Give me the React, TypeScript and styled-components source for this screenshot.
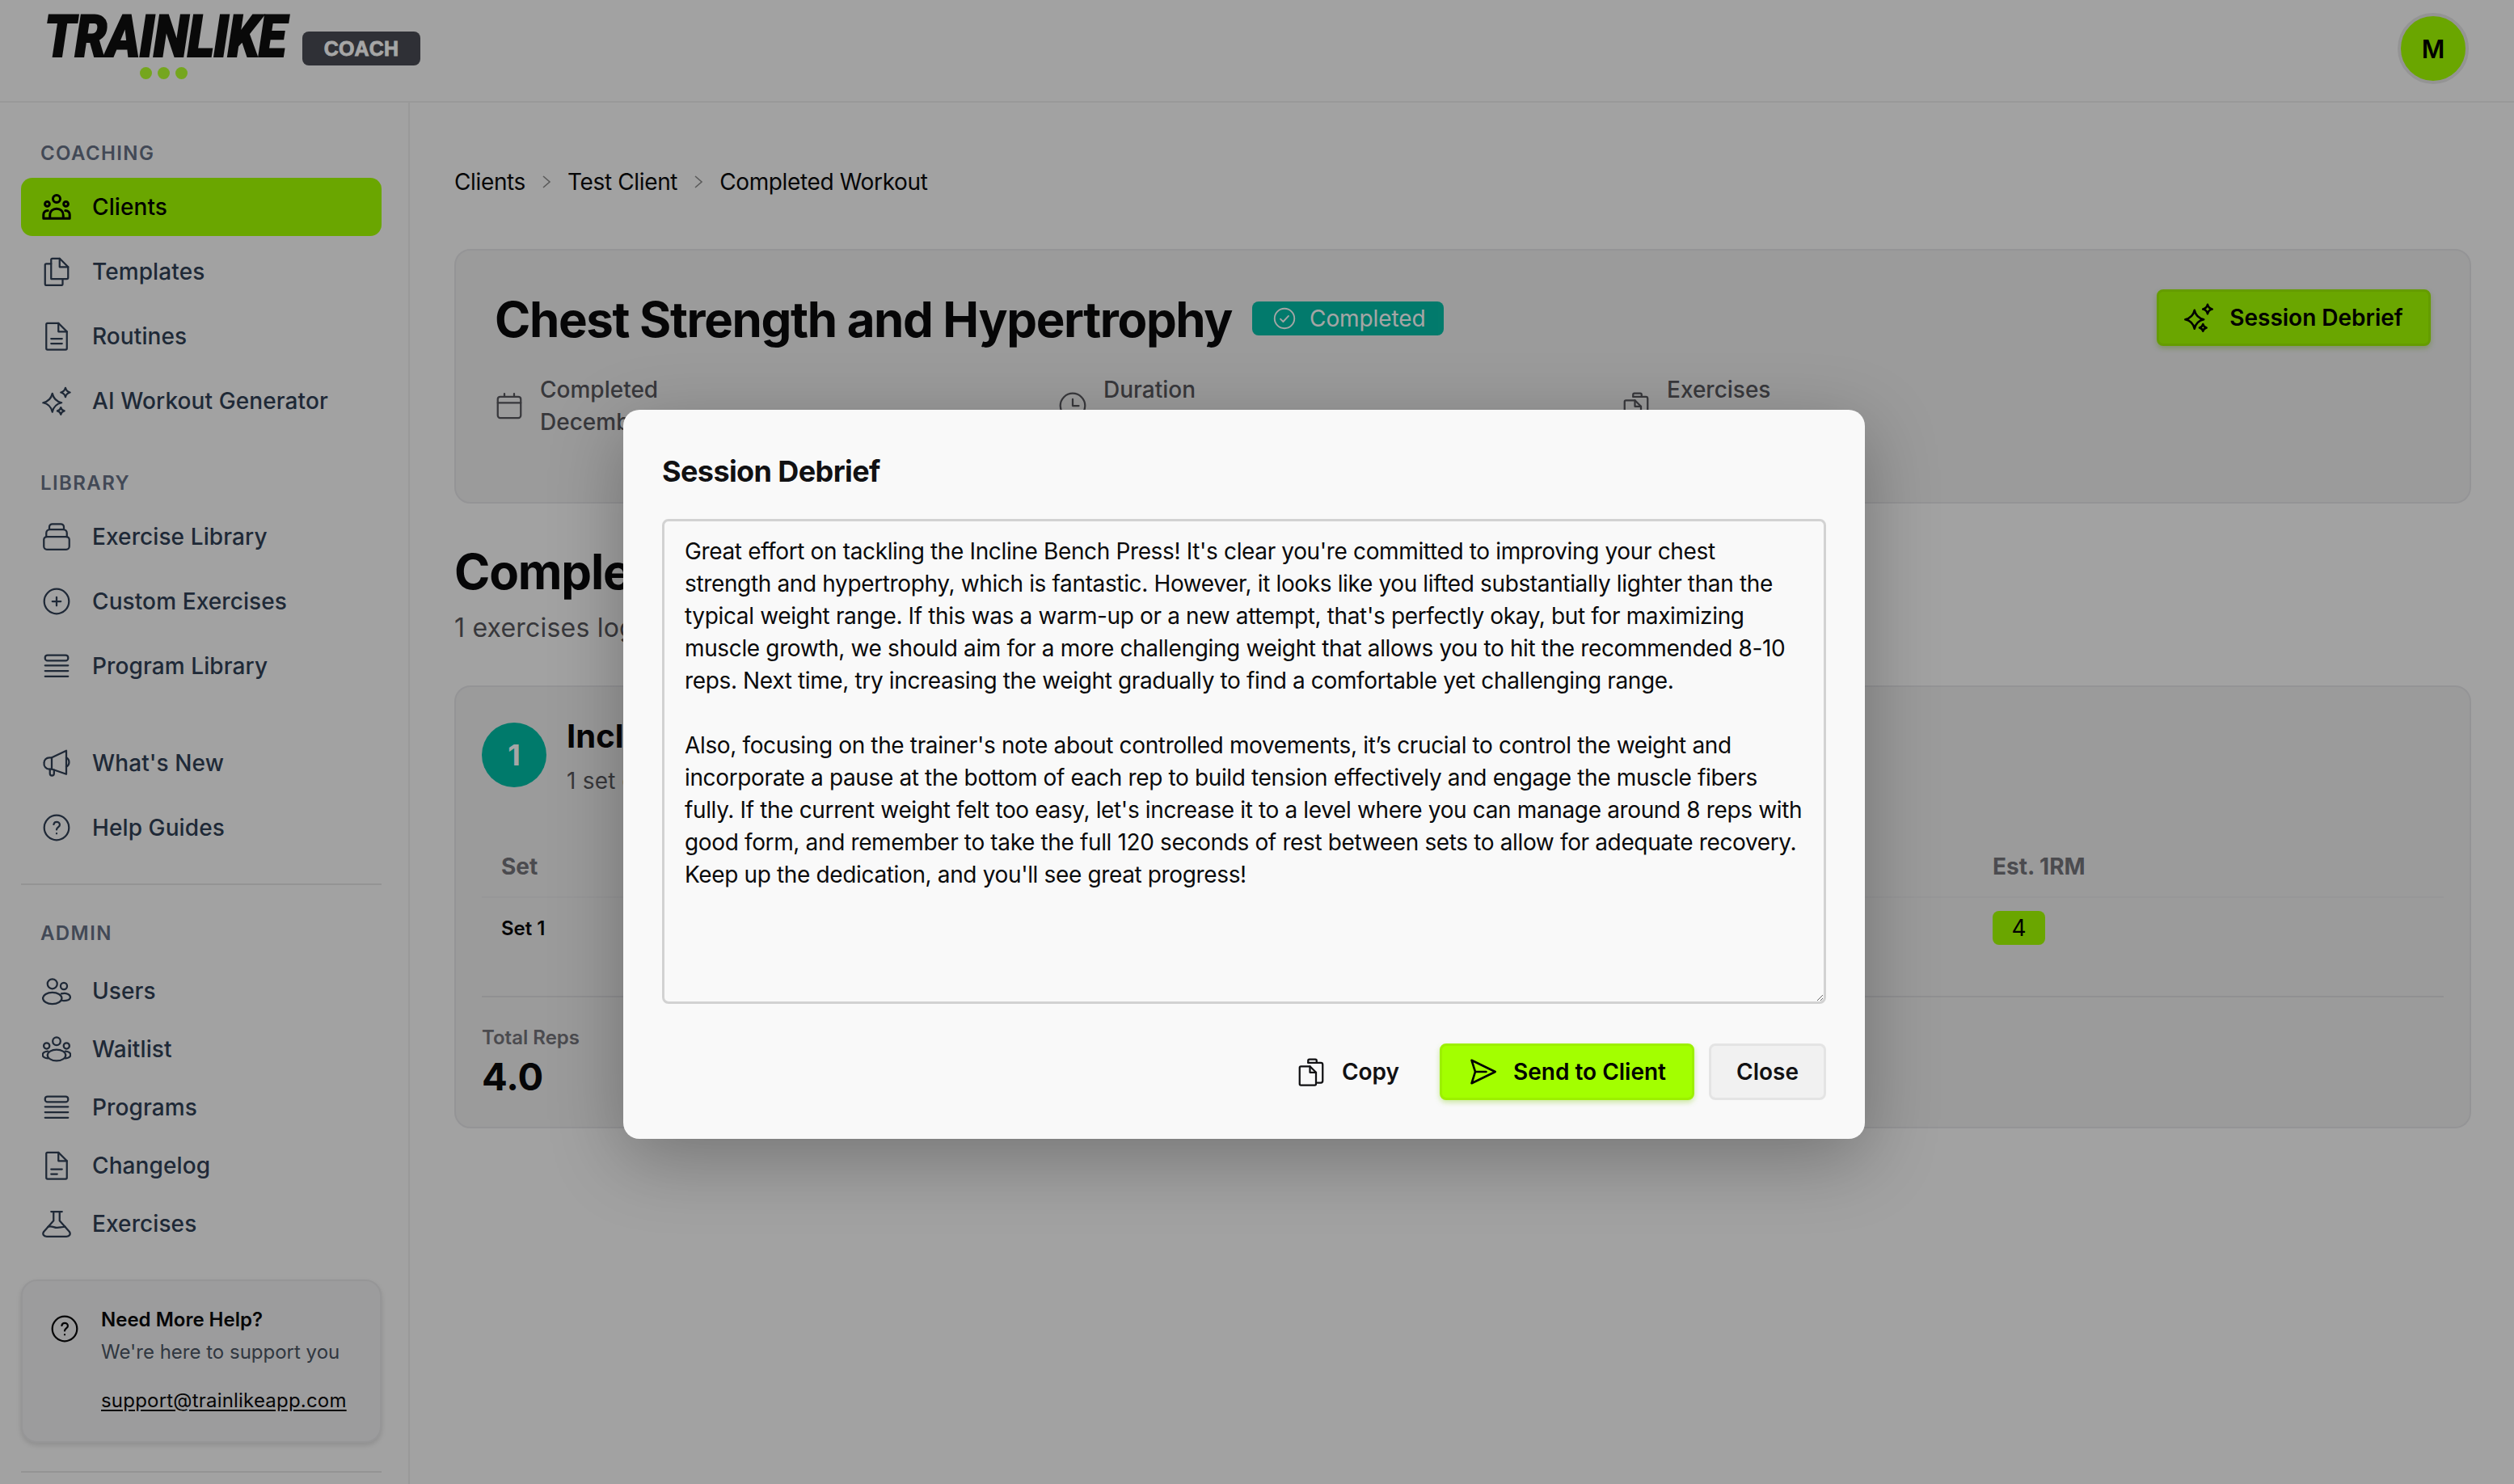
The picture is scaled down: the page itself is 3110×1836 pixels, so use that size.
import styled, { createGlobalStyle } from "styled-components";
import { ReactNode } from "react";

const GlobalStyle = createGlobalStyle`
  html, body {
    margin: 0;
    padding: 0;
    background: #f9f9f9;
  }
  * {
    box-sizing: border-box;
  }
`;

const Page = styled.div`
  position: relative;
  width: 3110px;
  height: 1836px;
  overflow: hidden;
  display: flex;
  flex-direction: column;
  background: #f9f9f9;
  font-family: Inter, "Liberation Sans", sans-serif;
  color: #0a0a0b;
`;

const TopBar = styled.header`
  flex: none;
  height: 127px;
  display: flex;
  align-items: flex-start;
  justify-content: space-between;
  padding: 14px 56px 0 55px;
  border-bottom: 2px solid #ececec;
`;

const Brand = styled.div`
  display: flex;
  align-items: flex-start;
  gap: 25px;
`;

const LogoBlock = styled.div`
  width: 294px;
  display: flex;
  flex-direction: column;
  align-items: center;
`;

const LogoText = styled.div`
  align-self: flex-start;
  font-family: Roboto, "Liberation Sans", sans-serif;
  font-size: 72px;
  line-height: 64px;
  font-weight: 900;
  font-style: italic;
  letter-spacing: -1px;
  white-space: nowrap;
  color: #0f0f0f;
  -webkit-text-stroke: 2px #0f0f0f;
  transform: scaleX(0.875);
  transform-origin: left center;
`;

const LogoDots = styled.div`
  display: flex;
  gap: 7px;
  margin-top: 5px;
`;

const LogoDot = styled.span`
  width: 15px;
  height: 15px;
  border-radius: 50%;
  background: #b4ff2e;
`;

const CoachBadge = styled.span`
  margin-top: 25px;
  width: 146px;
  height: 42px;
  display: flex;
  align-items: center;
  justify-content: center;
  border-radius: 8px;
  background: #494b53;
  color: #ffffff;
  font-family: "Liberation Sans", Arial, sans-serif;
  font-size: 25px;
  font-weight: 700;
  letter-spacing: 0.2px;
  -webkit-text-stroke: 0.8px #ffffff;
`;

const Avatar = styled.div`
  width: 88px;
  height: 88px;
  margin-top: 2px;
  border: 4px solid #e4e4e4;
  border-radius: 50%;
  background: #a3ff00;
  display: flex;
  align-items: center;
  justify-content: center;
  font-size: 31px;
  font-weight: 600;
  color: #000;
`;

const Body = styled.div`
  flex: 1;
  min-height: 0;
  display: flex;
`;

const Sidebar = styled.aside`
  flex: none;
  width: 507px;
  padding: 47px 33px 0 26px;
  border-right: 2px solid #ececec;
  display: flex;
  flex-direction: column;
  overflow: hidden;
`;

const SectionLabel = styled.div<{ $gap?: number }>`
  padding-left: 24px;
  font-size: 24px;
  line-height: 32px;
  font-weight: 600;
  letter-spacing: 1.4px;
  color: #667085;
  margin-bottom: ${(p) => p.$gap ?? 14}px;
`;

const NavList = styled.nav<{ $end?: number }>`
  display: flex;
  flex-direction: column;
  gap: 8px;
  margin-bottom: ${(p) => p.$end ?? 50}px;
`;

const NavItem = styled.a<{ $active?: boolean; $compact?: boolean }>`
  height: ${(p) => (p.$compact ? 64 : 72)}px;
  display: flex;
  align-items: center;
  gap: 26px;
  padding-left: 26px;
  border-radius: 14px;
  font-size: 28px;
  font-weight: 500;
  letter-spacing: 0.1px;
  color: ${(p) => (p.$active ? "#000" : "#303f55")};
  background: ${(p) => (p.$active ? "#a3ff00" : "transparent")};
  svg {
    flex: none;
  }
`;

const SideDivider = styled.hr<{ $top: number; $bottom: number }>`
  width: 100%;
  margin: ${(p) => p.$top}px 0 ${(p) => p.$bottom}px;
  border: 0;
  border-top: 2px solid #e4e4e4;
`;

const HelpCard = styled.div`
  flex: none;
  height: 202px;
  padding: 32px 20px 0 34px;
  display: flex;
  gap: 27px;
  border: 2px solid #e6e6e8;
  border-radius: 20px;
  background: #f0f0f2;
  box-shadow: 0 3px 6px rgba(0, 0, 0, 0.12);
  svg {
    flex: none;
    margin-top: 9px;
  }
`;

const HelpText = styled.div`
  display: flex;
  flex-direction: column;
`;

const HelpTitle = styled.div`
  font-size: 24px;
  line-height: 32px;
  font-weight: 600;
  color: #0a0a0b;
`;

const HelpSub = styled.div`
  margin-top: 8px;
  font-size: 24px;
  line-height: 32px;
  color: #4b5563;
`;

const HelpLink = styled.a`
  margin-top: 28px;
  font-size: 24px;
  line-height: 32px;
  letter-spacing: 0.2px;
  color: #0a0a0b;
  text-decoration: underline;
  text-underline-offset: 3px;
`;

const Main = styled.main`
  flex: 1;
  min-width: 0;
  padding: 78px 53px 0 55px;
`;

const Crumbs = styled.div`
  display: flex;
  align-items: center;
  gap: 17px;
  height: 40px;
  margin-bottom: 63px;
  font-size: 28px;
  letter-spacing: -0.36px;
  color: #0a0a0b;
`;

const Card = styled.section`
  border: 2px solid #e4e4e6;
  border-radius: 20px;
  background: #eeeeef;
`;

const HeroCard = styled(Card)`
  height: 315px;
  padding: 49px 48px 0;
  display: flex;
  justify-content: space-between;
  align-items: flex-start;
  margin-bottom: 48px;
`;

const HeroInfo = styled.div`
  flex: 1;
  min-width: 0;
  display: flex;
  flex-direction: column;
  gap: 31px;
`;

const TitleRow = styled.div`
  display: flex;
  align-items: center;
  gap: 25px;
  height: 72px;
`;

const Title = styled.h1`
  margin: 0;
  font-size: 60px;
  line-height: 72px;
  font-weight: 700;
  letter-spacing: -1.37px;
  white-space: nowrap;
  color: #0a0a0b;
`;

const StatusBadge = styled.span`
  height: 42px;
  width: 237px;
  display: flex;
  align-items: center;
  gap: 16px;
  padding-left: 25px;
  margin-top: -2px;
  border-radius: 8px;
  background: #00bca5;
  color: #fff;
  font-size: 28px;
  letter-spacing: -0.1px;
  opacity: 0.98;
`;

const MetaGrid = styled.div`
  display: grid;
  grid-template-columns: repeat(3, 697px);
`;

const MetaItem = styled.div`
  display: flex;
  align-items: center;
  gap: 20px;
  font-size: 28px;
  line-height: 40px;
  font-weight: 500;
  color: #57575c;
`;

const MetaText = styled.div`
  display: flex;
  flex-direction: column;
`;

const GreenButton = styled.button`
  flex: none;
  display: flex;
  align-items: center;
  justify-content: center;
  gap: 20px;
  height: 70px;
  border: 3px solid #9cf000;
  border-radius: 8px;
  background: #a3ff00;
  color: #000;
  font-family: inherit;
  font-size: 28px;
  font-weight: 600;
  white-space: nowrap;
  box-shadow: 0 3px 6px rgba(120, 200, 0, 0.35);
`;

const DebriefButton = styled(GreenButton)`
  width: 339px;
  margin-top: -1px;
`;

const SectionTitle = styled.h2`
  margin: 0 0 10px;
  font-size: 60px;
  line-height: 72px;
  font-weight: 700;
  letter-spacing: -1.2px;
  color: #0a0a0b;
`;

const SectionSub = styled.p`
  margin: 0 0 47px;
  font-size: 32px;
  line-height: 48px;
  letter-spacing: 0.2px;
  color: #57575c;
`;

const ExerciseCard = styled(Card)`
  height: 548px;
  padding: 37px 32px 0;
`;

const ExerciseHead = styled.div`
  display: flex;
  align-items: flex-start;
  gap: 25px;
  margin-bottom: 64px;
`;

const NumberCircle = styled.div`
  flex: none;
  width: 80px;
  height: 80px;
  margin-top: 7px;
  border-radius: 50%;
  background: #00bca5;
  color: #fff;
  display: flex;
  align-items: center;
  justify-content: center;
  font-size: 36px;
  font-weight: 700;
`;

const ExerciseName = styled.div`
  font-size: 40px;
  line-height: 48px;
  font-weight: 700;
  color: #0a0a0b;
`;

const ExerciseSets = styled.div`
  margin-top: 11px;
  font-size: 28px;
  line-height: 40px;
  letter-spacing: 0.2px;
  color: #57575c;
`;

const TableRow = styled.div<{ $head?: boolean }>`
  display: grid;
  grid-template-columns: repeat(4, 461.25px) 1fr;
  height: ${(p) => (p.$head ? 61 : 123)}px;
  padding: ${(p) => (p.$head ? "2px 24px 0" : "16px 24px 0")};
  border-bottom: 2px solid ${(p) => (p.$head ? "#e8e8ea" : "#dedee0")};
`;

const HeadCell = styled.div`
  font-size: 28px;
  line-height: 40px;
  font-weight: 700;
  color: #73737a;
`;

const BodyCell = styled.div`
  font-size: 24px;
  line-height: 44px;
  font-weight: 600;
  color: #0a0a0b;
`;

const RepBadge = styled.span`
  display: flex;
  align-items: center;
  justify-content: center;
  width: 65px;
  height: 42px;
  border-radius: 8px;
  background: #a3ff00;
  font-size: 28px;
  font-weight: 400;
  color: #000;
`;

const Totals = styled.div`
  margin-top: 34px;
`;

const TotalLabel = styled.div`
  font-size: 24px;
  line-height: 32px;
  font-weight: 600;
  color: #73737a;
`;

const TotalValue = styled.div`
  margin-top: 4px;
  font-size: 47px;
  line-height: 56px;
  font-weight: 700;
  color: #0a0a0b;
`;

const Backdrop = styled.div`
  position: absolute;
  inset: 0;
  background: rgba(0, 0, 0, 0.35);
`;

const Modal = styled.div`
  position: absolute;
  left: 771px;
  top: 507px;
  width: 1536px;
  height: 902px;
  padding: 48px;
  display: flex;
  flex-direction: column;
  border-radius: 20px;
  background: #f9f9f9;
  box-shadow: 0 24px 90px rgba(0, 0, 0, 0.28);
`;

const ModalTitle = styled.h3`
  margin: 0 0 31px;
  font-size: 36px;
  line-height: 56px;
  font-weight: 700;
  letter-spacing: -0.6px;
  color: #111113;
`;

const DebriefText = styled.textarea`
  width: 100%;
  height: 600px;
  padding: 17px 26px 17px 25px;
  border: 3px solid #d2d2d2;
  border-radius: 8px;
  background: #f9f9f9;
  color: #0a0a0b;
  font-family: inherit;
  font-size: 28px;
  line-height: 40px;
  letter-spacing: -0.36px;
  outline: none;
  overflow: hidden;
`;

const ModalActions = styled.div`
  margin-top: 49px;
  display: flex;
  justify-content: flex-end;
  gap: 18px;
`;

const GhostButton = styled.button`
  display: flex;
  align-items: center;
  gap: 20px;
  height: 70px;
  padding: 0 32px;
  border: 0;
  background: transparent;
  color: #111113;
  font-family: inherit;
  font-size: 28px;
  font-weight: 600;
`;

const SendButton = styled(GreenButton)`
  width: 315px;
`;

const CloseButton = styled.button`
  width: 145px;
  height: 70px;
  border: 3px solid #e4e4e4;
  border-radius: 8px;
  background: #f1f1f1;
  color: #111113;
  font-family: inherit;
  font-size: 28px;
  font-weight: 600;
`;

function Icon({ size = 36, width = 1.5, children }: { size?: number; width?: number; children: ReactNode }) {
  return (
    <svg
      width={size}
      height={size}
      viewBox="0 0 24 24"
      fill="none"
      stroke="currentColor"
      strokeWidth={width}
      strokeLinecap="round"
      strokeLinejoin="round"
    >
      {children}
    </svg>
  );
}

// four pointed star used by the sparkle icons
const star = (x: number, y: number, a: number) => {
  const c = a * 0.18;
  return `M${x} ${y - a}Q${x + c} ${y - c} ${x + a} ${y}Q${x + c} ${y + c} ${x} ${y + a}Q${x - c} ${y + c} ${x - a} ${y}Q${x - c} ${y - c} ${x} ${y - a}Z`;
};

const SparksIcon = ({ width }: { width?: number }) => (
  <Icon width={width}>
    <path d={star(8.5, 13.5, 7.6)} />
    <path d={star(19.3, 5, 3.8)} />
    <path d={star(15.5, 20.3, 2.9)} />
  </Icon>
);

const ClientsIcon = () => (
  <Icon width={2}>
    <circle cx="12" cy="5.3" r="3" />
    <circle cx="4.3" cy="9.6" r="1.9" />
    <circle cx="19.7" cy="9.6" r="1.9" />
    <path d="M1.2 21.5v-3c0-2.200 1.500-3.500 3.600-3.500M22.800 21.500v-3c0-2.200-1.500-3.500-3.600-3.500M6.500 21.500v-2.500c0-3.500 2.400-5.500 5.500-5.500s5.500 2 5.500 5.500v2.500M1.200 21.500h21.600" />
  </Icon>
);

const TemplatesIcon = () => (
  <Icon>
    <path d="M7.500 18V2.200a1 1 0 0 1 1-1h6l7 7v8.800a1 1 0 0 1-1 1H7.500" />
    <path d="M14.500 1.200v7h7" />
    <path d="M7.500 5.500H3.500a1 1 0 0 0-1 1v15.800a1 1 0 0 0 1 1h12.500a1 1 0 0 0 1-1V18" />
  </Icon>
);

const RoutinesIcon = () => (
  <Icon>
    <path d="M3.500 2.200a1 1 0 0 1 1-1h9l7 7v13.800a1 1 0 0 1-1 1h-15a1 1 0 0 1-1-1z" />
    <path d="M13.500 1.200v7h7M7.500 14h9M7.500 18h9" />
  </Icon>
);

const WeightIcon = () => (
  <Icon>
    <rect x="1.500" y="12" width="21" height="10.500" rx="2.500" />
    <path d="M3.500 12v-3a3 3 0 0 1 3-3h11a3 3 0 0 1 3 3v3M6 6V4a2.500 2.500 0 0 1 2.500-2.500h7A2.500 2.500 0 0 1 18 4v2" />
  </Icon>
);

const PlusCircleIcon = () => (
  <Icon>
    <circle cx="12" cy="12" r="10.200" />
    <path d="M8.500 12h7M12 8.500v7" />
  </Icon>
);

const StackIcon = () => (
  <Icon>
    <rect x="2.500" y="3" width="19" height="4.600" rx="2" />
    <path d="M2.500 11.500h19M2.500 16h19M2.500 20.500h19" />
  </Icon>
);

const MegaphoneIcon = () => (
  <Icon>
    <path d="M20 1.800v19.400L8 17H6a4.300 4.300 0 0 1-4.300-5A4.300 4.300 0 0 1 6 7.500h2z" />
    <path d="M8 7.500V17M6.500 17v3.700a1.700 1.700 0 0 0 3.400 0v-3M20 7.500c1.400.7 2.300 2.200 2.300 3.800s-.9 3.100-2.300 3.800" />
  </Icon>
);

const HelpIcon = () => (
  <Icon>
    <circle cx="12" cy="12" r="10.200" />
    <path d="M9.600 9.300A2.500 2.500 0 0 1 12 7.300c1.500 0 2.600 1 2.600 2.300 0 1.900-2.600 2-2.600 4" />
    <path d="M12 16.800v.1" />
  </Icon>
);

const UsersIcon = () => (
  <Icon>
    <circle cx="8.500" cy="6.200" r="4" />
    <circle cx="18" cy="8" r="2.700" />
    <ellipse cx="8.500" cy="18" rx="7.800" ry="4.700" />
    <path d="M16 14.300c3.800-1 7.300.4 7.300 3 0 1.900-2.700 3-6.600 2.700" />
  </Icon>
);

const WaitlistIcon = () => (
  <Icon>
    <circle cx="12" cy="5.500" r="3.200" />
    <circle cx="3.800" cy="9.300" r="2.400" />
    <circle cx="20.200" cy="9.300" r="2.400" />
    <ellipse cx="12" cy="17" rx="7.500" ry="4.600" />
    <path d="M4.800 13.800c-2.500.2-4.300 1.400-4.300 3 0 1.400 1.700 2.500 4.300 2.800M19.200 13.800c2.500.2 4.300 1.400 4.300 3 0 1.400-1.700 2.500-4.300 2.800" />
  </Icon>
);

const ChangelogIcon = () => (
  <Icon>
    <path d="M3.500 2.200a1 1 0 0 1 1-1h9l7 7v13.800a1 1 0 0 1-1 1h-15a1 1 0 0 1-1-1z" />
    <path d="M13.500 1.200v7h7M7.500 15h9M7.500 19h5" />
  </Icon>
);

const FlaskIcon = () => (
  <Icon>
    <path d="M7.500 2h9M9.500 2v7.500L1.500 18.500c-1.400 2 -.3 4 2.400 4h16.200c2.700 0 3.800-2 2.400-4l-8-9V2" />
    <path d="M5 14.500c3.200-1.200 5 1 7.500.8 2.200-.2 4-.6 6.500-.8" />
  </Icon>
);

const CalendarIcon = () => (
  <Icon>
    <rect x="2.500" y="4.500" width="19" height="17.500" rx="2" />
    <path d="M2.500 9.500h19M8 2v2.500M16 2v2.500" />
  </Icon>
);

const ClockIcon = () => (
  <Icon>
    <circle cx="12" cy="12" r="10.200" />
    <path d="M12 6.500V12h5" />
  </Icon>
);

const CheckCircleIcon = () => (
  <Icon size={30}>
    <circle cx="12" cy="12" r="9.800" />
    <path d="M8 12.500l2.700 2.700L16 9.500" />
  </Icon>
);

const ChevronIcon = () => (
  <svg width="18" height="24" viewBox="0 0 18 24" fill="none" stroke="#8a8a8a" strokeWidth="1.600">
    <path d="M5 5l8 7-8 7" />
  </svg>
);

const CopyIcon = () => (
  <Icon>
    <path d="M9.500 4.500V2.800a1 1 0 0 1 1-1h5a1 1 0 0 1 1 1v1.700h3.500a1.500 1.500 0 0 1 1.500 1.500v13.500a1.500 1.500 0 0 1-1.500 1.500H17" />
    <path d="M9.500 4.500h7" />
    <path d="M2.500 8.500a1 1 0 0 1 1-1h7.500l5 5v9.500a1 1 0 0 1-1 1H3.500a1 1 0 0 1-1-1z" />
    <path d="M11 7.500v5h5" />
  </Icon>
);

const SendIcon = () => (
  <Icon width={1.7}>
    <path d="M3 2.500L22.500 12 3 21.500 6 12zM6 12h9" />
  </Icon>
);

const debrief = `Great effort on tackling the Incline Bench Press! It's clear you're committed to improving your chest strength and hypertrophy, which is fantastic. However, it looks like you lifted substantially lighter than the typical weight range. If this was a warm-up or a new attempt, that's perfectly okay, but for maximizing muscle growth, we should aim for a more challenging weight that allows you to hit the recommended 8-10 reps. Next time, try increasing the weight gradually to find a comfortable yet challenging range.

Also, focusing on the trainer's note about controlled movements, it\u2019s crucial to control the weight and incorporate a pause at the bottom of each rep to build tension effectively and engage the muscle fibers fully. If the current weight felt too easy, let's increase it to a level where you can manage around 8 reps with good form, and remember to take the full 120 seconds of rest between sets to allow for adequate recovery. Keep up the dedication, and you'll see great progress!`;

export default function App() {
  return (
    <Page>
      <GlobalStyle />
      <TopBar>
        <Brand>
          <LogoBlock>
            <LogoText>TRAINLIKE</LogoText>
            <LogoDots>
              <LogoDot />
              <LogoDot />
              <LogoDot />
            </LogoDots>
          </LogoBlock>
          <CoachBadge>COACH</CoachBadge>
        </Brand>
        <Avatar>M</Avatar>
      </TopBar>

      <Body>
        <Sidebar>
          <SectionLabel>COACHING</SectionLabel>
          <NavList>
            <NavItem $active>
              <ClientsIcon />
              Clients
            </NavItem>
            <NavItem>
              <TemplatesIcon />
              Templates
            </NavItem>
            <NavItem>
              <RoutinesIcon />
              Routines
            </NavItem>
            <NavItem>
              <SparksIcon />
              AI Workout Generator
            </NavItem>
          </NavList>

          <SectionLabel>LIBRARY</SectionLabel>
          <NavList $end={48}>
            <NavItem>
              <WeightIcon />
              Exercise Library
            </NavItem>
            <NavItem>
              <PlusCircleIcon />
              Custom Exercises
            </NavItem>
            <NavItem>
              <StackIcon />
              Program Library
            </NavItem>
          </NavList>

          <NavList $end={33}>
            <NavItem>
              <MegaphoneIcon />
              What's New
            </NavItem>
            <NavItem>
              <HelpIcon />
              Help Guides
            </NavItem>
          </NavList>

          <SideDivider $top={0} $bottom={44} />

          <SectionLabel $gap={23}>ADMIN</SectionLabel>
          <NavList $end={37}>
            <NavItem $compact>
              <UsersIcon />
              Users
            </NavItem>
            <NavItem $compact>
              <WaitlistIcon />
              Waitlist
            </NavItem>
            <NavItem $compact>
              <StackIcon />
              Programs
            </NavItem>
            <NavItem $compact>
              <ChangelogIcon />
              Changelog
            </NavItem>
            <NavItem $compact>
              <FlaskIcon />
              Exercises
            </NavItem>
          </NavList>

          <HelpCard>
            <HelpIcon />
            <HelpText>
              <HelpTitle>Need More Help?</HelpTitle>
              <HelpSub>We're here to support you</HelpSub>
              <HelpLink>support@trainlikeapp.com</HelpLink>
            </HelpText>
          </HelpCard>
          <SideDivider $top={35} $bottom={0} />
        </Sidebar>

        <Main>
          <Crumbs>
            <span>Clients</span>
            <ChevronIcon />
            <span>Test Client</span>
            <ChevronIcon />
            <span>Completed Workout</span>
          </Crumbs>

          <HeroCard>
            <HeroInfo>
              <TitleRow>
                <Title>Chest Strength and Hypertrophy</Title>
                <StatusBadge>
                  <CheckCircleIcon />
                  Completed
                </StatusBadge>
              </TitleRow>
              <MetaGrid>
                <MetaItem>
                  <CalendarIcon />
                  <MetaText>
                    <span>Completed</span>
                    <span>December 2, 2025</span>
                  </MetaText>
                </MetaItem>
                <MetaItem>
                  <ClockIcon />
                  <MetaText>
                    <span>Duration</span>
                    <span>12 minutes</span>
                  </MetaText>
                </MetaItem>
                <MetaItem>
                  <CopyIcon />
                  <MetaText>
                    <span>Exercises</span>
                    <span>1</span>
                  </MetaText>
                </MetaItem>
              </MetaGrid>
            </HeroInfo>
            <DebriefButton>
              <SparksIcon width={1.7} />
              Session Debrief
            </DebriefButton>
          </HeroCard>

          <SectionTitle>Completed Exercises</SectionTitle>
          <SectionSub>1 exercises logged</SectionSub>

          <ExerciseCard>
            <ExerciseHead>
              <NumberCircle>1</NumberCircle>
              <div>
                <ExerciseName>Incline Bench Press</ExerciseName>
                <ExerciseSets>1 set completed</ExerciseSets>
              </div>
            </ExerciseHead>
            <TableRow $head>
              <HeadCell>Set</HeadCell>
              <HeadCell>Weight</HeadCell>
              <HeadCell>Reps</HeadCell>
              <HeadCell>RPE</HeadCell>
              <HeadCell>Est. 1RM</HeadCell>
            </TableRow>
            <TableRow>
              <BodyCell>Set 1</BodyCell>
              <BodyCell>4 lbs</BodyCell>
              <BodyCell>1</BodyCell>
              <BodyCell>-</BodyCell>
              <div>
                <RepBadge>4</RepBadge>
              </div>
            </TableRow>
            <Totals>
              <TotalLabel>Total Reps</TotalLabel>
              <TotalValue>4.0</TotalValue>
            </Totals>
          </ExerciseCard>
        </Main>
      </Body>

      <Backdrop />

      <Modal>
        <ModalTitle>Session Debrief</ModalTitle>
        <DebriefText defaultValue={debrief} />
        <ModalActions>
          <GhostButton>
            <CopyIcon />
            Copy
          </GhostButton>
          <SendButton>
            <SendIcon />
            Send to Client
          </SendButton>
          <CloseButton>Close</CloseButton>
        </ModalActions>
      </Modal>
    </Page>
  );
}
